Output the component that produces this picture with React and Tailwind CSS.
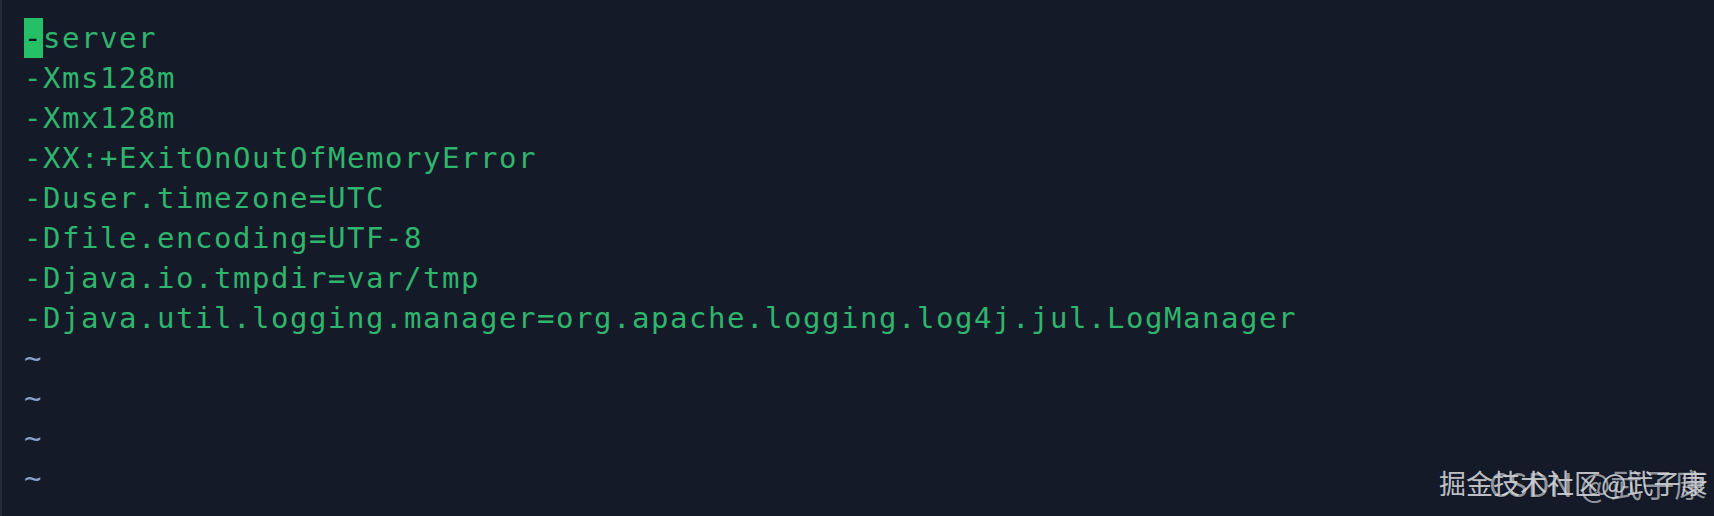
import React from 'react';

const lines = [
  '-server',
  '-Xms128m',
  '-Xmx128m',
  '-XX:+ExitOnOutOfMemoryError',
  '-Duser.timezone=UTC',
  '-Dfile.encoding=UTF-8',
  '-Djava.io.tmpdir=var/tmp',
  '-Djava.util.logging.manager=org.apache.logging.log4j.jul.LogManager',
];

const App = () => {
  return (
    <div className="relative h-[516px] w-full overflow-hidden bg-[#151a29] border-l-2 border-[#262b3a]">
      <div
        className="pl-[22px] pt-[18px] text-[29px] leading-[40px] tracking-[1.54px] text-[#2fb56c] whitespace-pre"
        style={{ fontFamily: '"DejaVu Sans Mono", "Liberation Mono", monospace' }}
      >
        {lines.map((line, i) => (
          <div key={i} className="h-[40px]">
            {i === 0 ? (
              <>
                <span className="inline-block h-[40px] w-[19px] bg-[#25c066] text-[#10151f] align-top">-</span>
                {line.slice(1)}
              </>
            ) : (
              line
            )}
          </div>
        ))}
        {[0, 1, 2, 3, 4].map((i) => (
          <div key={'t' + i} className="h-[40px] text-[#8aa2c6]">~</div>
        ))}
      </div>

      {/* watermark: two stamps laid over each other */}
      <div
        className="absolute left-[1487px] top-[463px] text-[32px] leading-[40px] text-[#8e939c] whitespace-nowrap [text-shadow:0_0_2px_#0b0e16]"
        style={{ fontFamily: '"Noto Sans CJK SC", "Noto Sans", sans-serif' }}
      >
        CSDN @武子康
      </div>
      <div
        className="absolute left-[1437px] top-[466px] text-[27px] font-normal leading-[34px] text-[#d4d6da]/90 whitespace-nowrap"
        style={{ fontFamily: '"Noto Sans CJK SC", "Noto Sans", sans-serif' }}
      >
        掘金技术社区@武子康
      </div>
    </div>
  );
};

export default App;
